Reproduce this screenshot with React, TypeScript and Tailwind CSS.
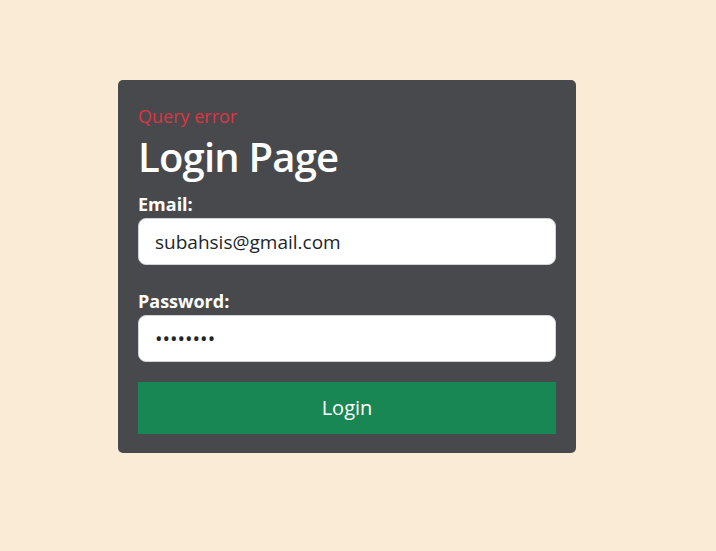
import React from 'react'

export default function App() {
  return (
    <div className="min-h-screen bg-[#faebd7] pt-[80px] font-['Open_Sans',sans-serif]">
      <div className="ml-[118px] w-[458px] rounded-[5px] bg-[#48494c] px-5 pt-[23px] pb-[19px]">
        <p className="text-[18px] leading-[27px] text-[#dc3545]">Query error</p>
        <h1 className="mt-[3px] text-[40px] leading-[48px] font-semibold tracking-[-0.8px] text-white">Login Page</h1>
        <form onSubmit={(e) => e.preventDefault()}>
          <label className="mt-[11px] mb-[2px] block text-[18px] leading-[24px] font-bold text-white">Email:</label>
          <input
            type="email"
            readOnly
            value="subahsis@gmail.com"
            className="block h-[47px] w-full rounded-lg border border-[#ced4da] bg-white px-4 text-[19px] text-[#212529] outline-none"
          />
          <label className="mt-[24px] mb-[2px] block text-[18px] leading-[24px] font-bold text-white">Password:</label>
          <input
            type="password"
            readOnly
            value="12345678"
            className="block h-[47px] w-full rounded-lg border border-[#ced4da] bg-white px-4 text-[20px] text-[#212529] outline-none"
          />
          <button className="mt-5 block h-[52px] w-full bg-[#198754] text-[20px] text-white">Login</button>
        </form>
      </div>
    </div>
  )
}
